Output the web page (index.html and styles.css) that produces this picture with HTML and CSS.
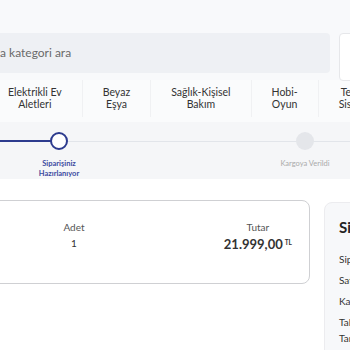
FILE: index.html
```html
<!DOCTYPE html>
<html lang="tr">
<head>
  <meta charset="UTF-8" />
  <meta name="viewport" content="width=device-width, initial-scale=1.0" />
  <title>Sipariş Detayı</title>
  <link rel="stylesheet" href="styles.css">
</head>
<body>

  <div class="header">
    <div class="search-row">
      <div class="search">a kategori ara</div>
      <div class="account-box"></div>
    </div>

    <div class="categories">
      <div class="cat">Elektrikli Ev<br>Aletleri</div>
      <div class="cat">Beyaz<br>Eşya</div>
      <div class="cat">Sağlık-Kişisel<br>Bakım</div>
      <div class="cat">Hobi-<br>Oyun</div>
      <div class="cat">Teknoloji<br>Sistemleri</div>
    </div>
  </div>

  <div class="stepper">
    <div class="track"></div>
    <div class="track-done"></div>
    <div class="step active">
      <span class="dot"></span>
      <span class="step-label">Siparişiniz<br>Hazırlanıyor</span>
    </div>
    <div class="step">
      <span class="dot"></span>
      <span class="step-label">Kargoya Verildi</span>
    </div>
  </div>

  <div class="content">
    <div class="item-card">
      <div class="col qty">
        <div class="col-title">Adet</div>
        <div class="col-value">1</div>
      </div>
      <div class="col total">
        <div class="col-title">Tutar</div>
        <div class="price">21.999,00<span class="currency">TL</span></div>
      </div>
    </div>

    <div class="summary">
      <h2>Sipariş Özeti</h2>
      <div class="row">Sipariş No</div>
      <div class="row">Satıcı</div>
      <div class="row">Kargo</div>
      <div class="row">Talep<br>Tarihi</div>
    </div>
  </div>

</body>
</html>
```

FILE: styles.css
```css
html, body {
  overflow: hidden;
}

body {
  font-family: Lato, "Open Sans", sans-serif;
  background: #fff;
  margin: 0;
  width: 350px;
  height: 350px;
  color: #333;
}

/* Header */
.header {
  background: #f8f9fb;
  padding-top: 33px;
}

.search-row {
  display: flex;
  align-items: flex-start;
  height: 47px;
}

.search {
  width: 330px;
  height: 40px;
  flex-shrink: 0;
  background: #eef0f4;
  border-radius: 0 4px 4px 0;
  font-size: 12px;
  line-height: 40px;
  color: #6a6a6a;
}

.account-box {
  width: 40px;
  height: 46px;
  flex-shrink: 0;
  margin-left: 9px;
  background: #fff;
  border: 1px solid #e6e7ea;
  border-radius: 4px;
}

.categories {
  display: flex;
  margin-left: -12px;
  height: 42px;
  background: #fafbfc;
}

.cat {
  flex-shrink: 0;
  padding: 7px 20px 0;
  font-size: 10.5px;
  line-height: 11.5px;
  text-align: center;
  color: #333;
  border-right: 1px solid #f0f1f3;
  height: 30px;
}

/* Stepper */
.stepper {
  position: relative;
  display: flex;
  height: 57px;
  background: #f5f6f8;
  padding-top: 10px;
  box-sizing: border-box;
  padding-left: 19px;
  gap: 166px;
}

.track {
  position: absolute;
  left: 0;
  right: 0;
  top: 19px;
  height: 1px;
  background: #e2e5ea;
}

.track-done {
  position: absolute;
  left: 0;
  width: 55px;
  top: 18px;
  height: 2px;
  background: #2d3b8e;
}

.step {
  position: relative;
  width: 80px;
  display: flex;
  flex-direction: column;
  align-items: center;
}

.dot {
  width: 18px;
  height: 18px;
  border-radius: 50%;
  background: #e4e6ea;
  box-sizing: border-box;
}

.step.active .dot {
  background: #fff;
  border: 2px solid #2d3b8e;
}

.step-label {
  margin-top: 9px;
  font-size: 7.5px;
  line-height: 10px;
  text-align: center;
  color: #aaa;
  white-space: nowrap;
}

.step.active .step-label {
  color: #3b4aa0;
  font-weight: bold;
}

/* Content */
.content {
  display: flex;
  align-items: flex-start;
  padding-top: 21px;
  margin-left: -20px;
  gap: 14px;
}

.item-card {
  flex-shrink: 0;
  width: 330px;
  height: 84px;
  box-sizing: border-box;
  border: 1px solid #cfd0d3;
  border-radius: 8px;
  background: #fff;
  display: flex;
  padding: 19px 17px 0 0;
}

.col {
  text-align: center;
}

.col-title {
  font-size: 10px;
  line-height: 14px;
  color: #555;
}

.qty {
  width: 40px;
  margin-left: 73px;
}

.col-value {
  font-size: 10px;
  line-height: 12px;
  margin-top: 3px;
}

.total {
  margin-left: auto;
}

.price {
  font-size: 13px;
  font-weight: bold;
  line-height: 18px;
  color: #333;
}

.currency {
  font-size: 6.5px;
  vertical-align: 4px;
  margin-left: 2px;
}

.summary {
  flex-shrink: 0;
  width: 200px;
  height: 160px;
  box-sizing: border-box;
  background: #f7f8fa;
  border: 1px solid #ececef;
  border-radius: 8px;
  padding: 14px 14px;
  margin-top: 2px;
}

.summary h2 {
  margin: 0 0 14px;
  font-size: 15px;
  line-height: 20px;
  color: #222;
}

.row {
  font-size: 10px;
  line-height: 16px;
  margin-bottom: 5px;
  color: #333;
}
```
